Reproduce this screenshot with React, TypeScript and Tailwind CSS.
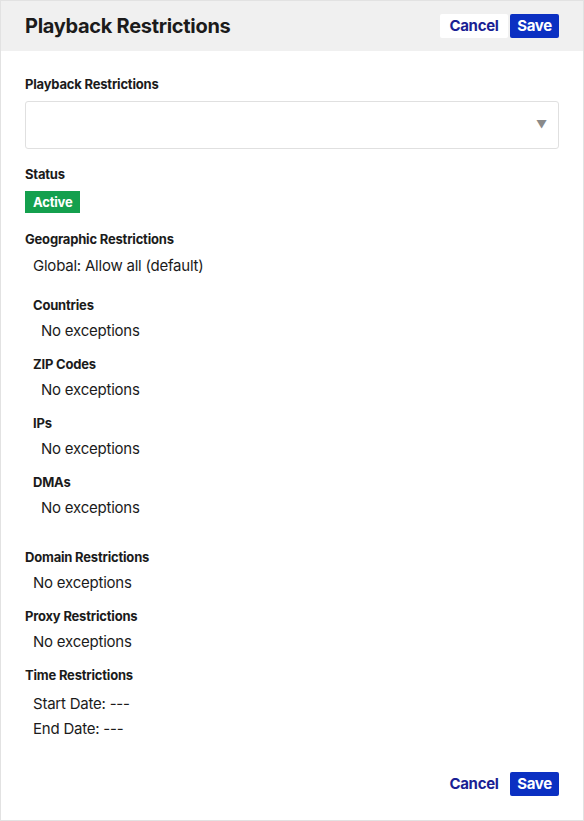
import React from 'react'

const font = { fontFamily: 'Inter, "Noto Sans", sans-serif' }

function Label({ children, className = '' }: { children: React.ReactNode; className?: string }) {
  return (
    <div className={`text-[13px] font-bold leading-5 tracking-[-0.015em] text-[#1b1b1b] ${className}`}>{children}</div>
  )
}

function Value({ children, className = '' }: { children: React.ReactNode; className?: string }) {
  return (
    <div className={`text-[15px] leading-[22px] tracking-[-0.015em] text-[#1b1b1b] ${className}`}>{children}</div>
  )
}

function Buttons({ white }: { white?: boolean }) {
  return (
    <div className="flex items-center gap-[2px]">
      <button
        type="button"
        className={`h-6 w-[68px] rounded-[2px] text-[15px] font-bold leading-6 tracking-[-0.02em] text-[#1a1f94] ${white ? 'bg-white' : ''}`}
      >
        Cancel
      </button>
      <button
        type="button"
        className="h-6 w-[49px] rounded-[2px] bg-[#0b30c2] text-[15px] font-bold leading-6 tracking-[-0.02em] text-white"
      >
        Save
      </button>
    </div>
  )
}

const geo = ['Countries', 'ZIP Codes', 'IPs', 'DMAs']

export default function App() {
  return (
    <div style={font} className="h-[821px] w-[584px] border border-[#e2e2e2] bg-white">
      <div className="flex h-[50px] items-center justify-between bg-[#f0f0f0] pl-6 pr-6">
        <h1 className="text-[20px] font-bold tracking-[-0.015em] text-[#1b1b1b]">Playback Restrictions</h1>
        <Buttons white />
      </div>

      <div className="px-6 pt-[23px] pb-6">
        <Label>Playback Restrictions</Label>
        <div className="relative mt-[7px] h-12 rounded-[3px] border border-[#e0e0e0] bg-white">
          <span className="absolute right-[11px] top-[17px] text-[11px] leading-none text-[#8a8a8a]">▼</span>
        </div>

        <Label className="mt-[15px]">Status</Label>
        <div className="mt-[7px] inline-block h-[22px] bg-[#14a04e] px-[8px] text-[13px] font-bold leading-[22px] tracking-[-0.015em] text-white">
          Active
        </div>

        <Label className="mt-4">Geographic Restrictions</Label>
        <div className="pl-2">
          <Value className="mt-[6px]">Global: Allow all (default)</Value>
          <div className="pt-[6px]">
            {geo.map((g) => (
              <div key={g} className="mt-[12px]">
                <Label>{g}</Label>
                <Value className="mt-[5px] pl-2">No exceptions</Value>
              </div>
            ))}
          </div>
        </div>

        <Label className="mt-[28px]">Domain Restrictions</Label>
        <Value className="mt-[5px] pl-2">No exceptions</Value>

        <Label className="mt-[12px]">Proxy Restrictions</Label>
        <Value className="mt-[5px] pl-2">No exceptions</Value>

        <Label className="mt-[12px]">Time Restrictions</Label>
        <Value className="mt-[8px] pl-2">Start Date: ---</Value>
        <Value className="mt-[3px] pl-2">End Date: ---</Value>

        <div className="mt-[32px] flex justify-end">
          <Buttons />
        </div>
      </div>
    </div>
  )
}
